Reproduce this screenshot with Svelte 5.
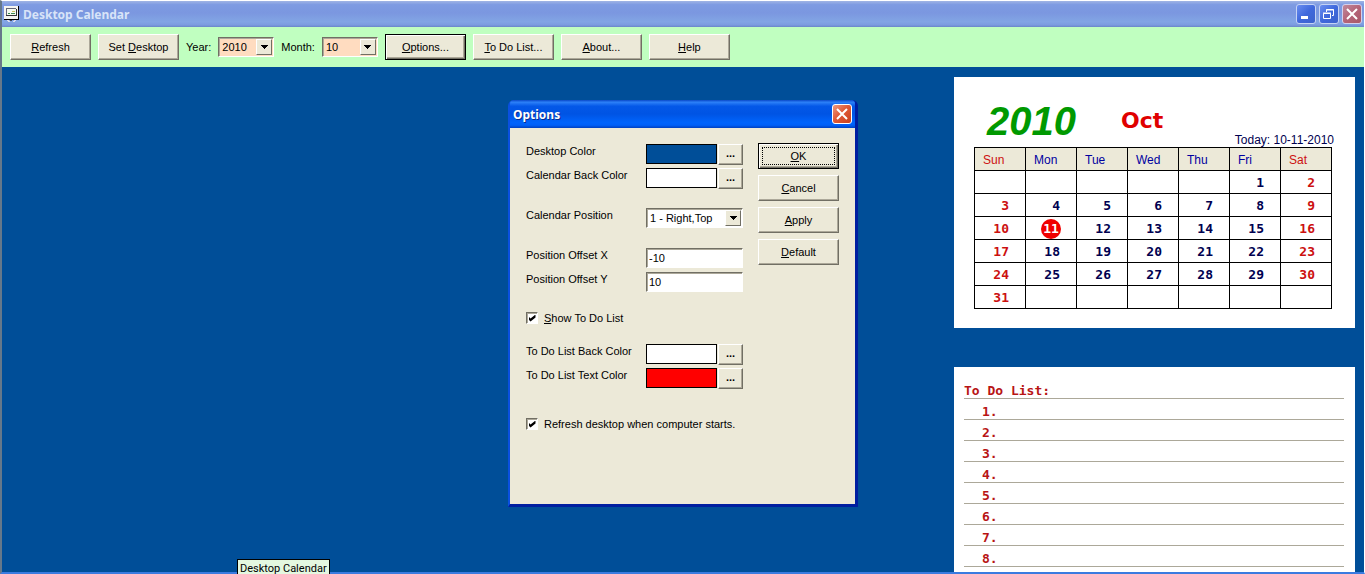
<script>
  const weekdays = ["Sun", "Mon", "Tue", "Wed", "Thu", "Fri", "Sat"];
  const years = [2009, 2010, 2011];
  const months = [1, 2, 3, 4, 5, 6, 7, 8, 9, 10, 11, 12];
  const positions = ["0 - Left,Top", "1 - Right,Top", "2 - Left,Bottom", "3 - Right,Bottom"];
  const todos = [1, 2, 3, 4, 5, 6, 7, 8];
  const today = 11;

  let year = $state(2010);
  let month = $state(10);
  let position = $state("1 - Right,Top");
  let offsetX = $state("-10");
  let offsetY = $state("10");
  let showTodo = $state(true);
  let refreshOnStart = $state(true);

  // October 2010 starts on a Friday
  const firstDay = 5;
  const weeks = [];
  for (let w = 0; w < 6; w++) {
    const week = [];
    for (let d = 0; d < 7; d++) {
      const day = w * 7 + d - firstDay + 1;
      week.push(day > 0 && day <= 31 ? day : null);
    }
    weeks.push(week);
  }
</script>

{#snippet arrow()}
  <span class="arrow">
    <svg width="7" height="4" viewBox="0 0 7 4" shape-rendering="crispEdges">
      <path d="M0 0h7v1H6v1H5v1H4v1H3V3H2V2H1V1H0z" fill="#000" />
    </svg>
  </span>
{/snippet}

{#snippet colorRow(label, color)}
  <div class="row">
    <span class="label">{label}</span>
    <div class="control">
      <span class="swatch {color}"></span>
      <button class="btn more" aria-label="Choose {label}">...</button>
    </div>
  </div>
{/snippet}

<div class="window">
  <header class="titlebar">
    <svg class="app-icon" width="16" height="17" viewBox="0 0 16 17" shape-rendering="crispEdges">
      <path d="M0 0h14v13H0z" fill="#f4f4f0" />
      <path d="M14 0h1v14H0v-1h14z" fill="#000" />
      <path d="M2 2h10v1H2zM2 2h1v7H2z" fill="#667" />
      <path d="M3 3h9v6H3z" fill="#f6fbf0" />
      <path d="M12 3h1v7H2V9h10z" fill="#333" />
      <path d="M4 7h2v1H4zM7 7h4v1H7z" fill="#3c8a50" />
      <path d="M8 5h3v1H8z" fill="#c8c060" />
      <path d="M3 14h2v1H3zM4 15h2v1H4zM10 14h2v1h-2zM9 15h2v1H9z" fill="#dde" />
      <path d="M6 14h2v1H6z" fill="#445" />
    </svg>
    <h1>Desktop Calendar</h1>
    <div class="caption">
      <button class="cap" aria-label="Minimize">
        <svg width="18" height="18" viewBox="0 0 18 18"><path d="M4 11h7v3H4z" fill="#fff" /></svg>
      </button>
      <button class="cap" aria-label="Restore">
        <svg width="18" height="18" viewBox="0 0 18 18" fill="none" stroke="#fff">
          <path d="M6.500 7V4.500h7v6H12M6 5h8" />
          <path d="M3.500 8.500h7v5h-7zM3 8h8" />
        </svg>
      </button>
      <button class="cap close dim" aria-label="Close">
        <svg width="18" height="18" viewBox="0 0 18 18"><path d="M4 4l10 10M14 4L4 14" stroke="#fff" stroke-width="2" /></svg>
      </button>
    </div>
  </header>

  <nav class="toolbar">
    <button class="btn"><u>R</u>efresh</button>
    <button class="btn">Set <u>D</u>esktop</button>
    <label for="year">Year:</label>
    <div class="select small">
      <select id="year" bind:value={year}>
        {#each years as y}<option value={y}>{y}</option>{/each}
      </select>
      {@render arrow()}
    </div>
    <label for="month">Month:</label>
    <div class="select small">
      <select id="month" bind:value={month}>
        {#each months as m}<option value={m}>{m}</option>{/each}
      </select>
      {@render arrow()}
    </div>
    <button class="btn default"><u>O</u>ptions...</button>
    <button class="btn"><u>T</u>o Do List...</button>
    <button class="btn"><u>A</u>bout...</button>
    <button class="btn"><u>H</u>elp</button>
  </nav>

  <main class="desktop">
    <div class="panels">
      <section class="calendar">
        <div class="heading">
          <span class="year">2010</span>
          <span class="month">Oct</span>
          <span class="today">Today: 10-11-2010</span>
        </div>
        <table>
          <thead>
            <tr>
              {#each weekdays as name}<th>{name}</th>{/each}
            </tr>
          </thead>
          <tbody>
            {#each weeks as week}
              <tr>
                {#each week as day}
                  <td>
                    {#if day === today}
                      <span class="current">{day}</span>
                    {:else}
                      {day ?? ""}
                    {/if}
                  </td>
                {/each}
              </tr>
            {/each}
          </tbody>
        </table>
      </section>

      <section class="todo">
        <h2>To Do List:</h2>
        <ul>
          {#each todos as n}
            <li>{n}.</li>
          {/each}
        </ul>
      </section>
    </div>

    <div class="dialog" role="dialog" aria-labelledby="dialog-title">
      <div class="dialog-title">
        <h2 id="dialog-title">Options</h2>
        <button class="cap close" aria-label="Close">
          <svg width="18" height="18" viewBox="0 0 18 18"><path d="M4 4l10 10M14 4L4 14" stroke="#fff" stroke-width="2" /></svg>
        </button>
      </div>
      <div class="dialog-body">
        <form>
          <div class="group">
            {@render colorRow("Desktop Color", "blue")}
            {@render colorRow("Calendar Back Color", "white")}
          </div>
          <div class="group">
            <div class="row">
              <label class="label" for="position">Calendar Position</label>
              <div class="control select">
                <select id="position" bind:value={position}>
                  {#each positions as p}<option value={p}>{p}</option>{/each}
                </select>
                {@render arrow()}
              </div>
            </div>
          </div>
          <div class="group">
            <div class="row">
              <label class="label" for="offset-x">Position Offset X</label>
              <input class="control" id="offset-x" type="text" bind:value={offsetX} />
            </div>
            <div class="row">
              <label class="label" for="offset-y">Position Offset Y</label>
              <input class="control" id="offset-y" type="text" bind:value={offsetY} />
            </div>
          </div>
          <label class="check">
            <input type="checkbox" bind:checked={showTodo} />
            <span><u>S</u>how To Do List</span>
          </label>
          <div class="group">
            {@render colorRow("To Do List Back Color", "white")}
            {@render colorRow("To Do List Text Color", "red")}
          </div>
          <label class="check startup">
            <input type="checkbox" bind:checked={refreshOnStart} />
            <span>Refresh desktop when computer starts.</span>
          </label>
        </form>
        <div class="actions">
          <button class="btn default focus"><u>O</u>K</button>
          <button class="btn"><u>C</u>ancel</button>
          <button class="btn"><u>A</u>pply</button>
          <button class="btn"><u>D</u>efault</button>
        </div>
      </div>
    </div>
  </main>

  <div class="tooltip" role="tooltip">Desktop Calendar</div>
</div>

<style>
  :global(body) {
    margin: 0;
    overflow: hidden;
  }

  .window {
    position: relative;
    box-sizing: border-box;
    height: 100vh;
    display: flex;
    flex-direction: column;
    border: solid;
    border-width: 1px 1px 2px 2px;
    border-color: #fff #fff #3a7be0 #66788a;
    font-family: "Liberation Sans", Arial, sans-serif;
    font-size: 11px;
    line-height: 14px;
    color: #000;
  }

  .window * {
    box-sizing: border-box;
  }

  button,
  select,
  input {
    font: inherit;
    color: inherit;
    margin: 0;
    border-radius: 0;
  }

  h1,
  h2 {
    margin: 0;
  }

  .titlebar {
    flex: none;
    display: flex;
    align-items: center;
    height: 26px;
    padding: 0 2px;
    background: linear-gradient(#a0b4e4 0%, #7e9be2 14%, #7b97e0 45%, #82a5e4 80%, #7c9ce0 92%, #6a86c8 100%);
  }

  .titlebar h1 {
    flex: 1;
    padding: 2px 0 0 3px;
    color: #d8e4f8;
    font: bold 12px/16px "Noto Sans", sans-serif;
  }

  .caption {
    display: flex;
    gap: 3px;
  }

  .cap {
    display: flex;
    align-items: center;
    justify-content: center;
    width: 20px;
    height: 20px;
    padding: 0;
    border: 1px solid #c4d2f4;
    border-radius: 3px;
    background: linear-gradient(135deg, #6a8ef0, #3f68dc 50%, #3c62cc);
  }

  .close {
    border-color: #fff;
    background: linear-gradient(135deg, #ee9a80, #e05a38 45%, #c8401c);
  }

  .dim {
    border-color: #d4d0ec;
    background: linear-gradient(135deg, #c08a9c, #b46478 50%, #a85868);
  }

  .toolbar {
    flex: none;
    display: flex;
    align-items: center;
    gap: 7px;
    height: 40px;
    padding: 0 8px;
    background: #c0ffc0;
  }

  .btn {
    flex: none;
    width: 81px;
    height: 26px;
    padding: 0;
    border: 1px solid;
    border-color: #fff #716f64 #716f64 #fff;
    box-shadow: inset -1px -1px #aca899;
    background: #ece9d8;
    text-align: center;
  }

  .btn.default {
    border-color: #000;
    box-shadow: inset 1px 1px #fff, inset -1px -1px #716f64, inset -2px -2px #aca899;
  }

  .btn.focus {
    outline: 1px dotted #000;
    outline-offset: -5px;
  }

  .btn.more {
    width: 25px;
    height: 21px;
    padding-bottom: 4px;
    font-weight: bold;
    line-height: 12px;
  }

  .select {
    position: relative;
    height: 20px;
    border: 1px solid;
    border-color: #716f64 #fff #fff #716f64;
    box-shadow: inset 1px 1px #aca899;
    background: #fff;
  }

  .select select {
    width: 100%;
    height: 100%;
    padding: 0 0 0 3px;
    border: 0;
    outline: 0;
    appearance: none;
    background: none;
  }

  .select.small {
    width: 56px;
    background: #ffdcc0;
  }

  /* drop-down button drawn over the right end of the select */
  .arrow {
    position: absolute;
    top: 1px;
    right: 1px;
    bottom: 1px;
    display: flex;
    align-items: center;
    justify-content: center;
    width: 16px;
    border: 1px solid;
    border-color: #fff #716f64 #716f64 #fff;
    background: #ece9d8;
    pointer-events: none;
  }

  .desktop {
    position: relative;
    flex: 1;
    min-height: 0;
    display: flex;
    justify-content: flex-end;
    padding: 10px 9px 0 0;
    background: #004e98;
  }

  .panels {
    display: flex;
    flex-direction: column;
    gap: 39px;
    width: 401px;
  }

  .calendar {
    padding: 20px 23px 19px 20px;
    background: #fff;
  }

  .heading {
    display: flex;
    align-items: center;
    height: 50px;
    padding-left: 13px;
  }

  .heading .year {
    padding-bottom: 2px;
    color: #009900;
    font: italic bold 40px/44px "Liberation Sans", sans-serif;
  }

  .heading .month {
    padding: 0 0 2px 45px;
    color: #e00000;
    font: bold 22px/26px "DejaVu Sans", sans-serif;
  }

  .today {
    flex: 1;
    align-self: flex-end;
    margin-right: -2px;
    color: #000050;
    font-size: 12px;
    text-align: right;
    white-space: nowrap;
  }

  table {
    width: 100%;
    table-layout: fixed;
    border-collapse: collapse;
  }

  th,
  td {
    height: 23px;
    padding: 2px 0 0;
    border: 1px solid #000;
  }

  th {
    padding-left: 8px;
    background: #ece9d8;
    color: #0000a0;
    font-size: 12px;
    font-weight: normal;
    text-align: left;
  }

  td {
    padding-right: 16px;
    color: #000050;
    font: bold 13px/16px "DejaVu Sans Mono", monospace;
    text-align: right;
  }

  th:first-child,
  th:last-child,
  td:first-child,
  td:last-child {
    color: #cc1010;
  }

  .current {
    display: block;
    width: 20px;
    height: 20px;
    margin-left: 15px;
    border-radius: 50%;
    background: #f00000;
    color: #fff;
    line-height: 20px;
    text-align: center;
  }

  .todo {
    flex: 1;
    min-height: 0;
    padding: 11px 11px 0 10px;
    background: #fff;
    color: #b81414;
    font: bold 13px/20px "DejaVu Sans Mono", monospace;
  }

  .todo h2,
  .todo li {
    height: 21px;
    border-bottom: 1px solid #aca899;
    font: inherit;
    line-height: 26px;
  }

  .todo ul {
    margin: 0;
    padding: 0;
    list-style: none;
  }

  .todo li {
    padding-left: 18px;
  }

  .dialog {
    position: absolute;
    top: 33px;
    left: 0;
    right: 0;
    width: 350px;
    margin: 0 auto;
    border: solid;
    border-width: 0 3px 3px 2px;
    border-color: #0830b8 #001ea0 #001ea0 #0a50e0;
    border-radius: 6px 6px 0 0;
    background: #0054e3;
  }

  .dialog-title {
    display: flex;
    align-items: center;
    justify-content: space-between;
    height: 28px;
    padding: 0 3px;
    border-radius: 4px 4px 0 0;
    background: linear-gradient(#0a48c8 0%, #2c80f8 8%, #0458e8 22%, #0054e4 50%, #0064fc 80%, #0060f8 90%, #0040c0 100%);
  }

  .dialog-title h2 {
    padding-top: 2px;
    color: #fff;
    font: bold 12px/16px "Noto Sans", sans-serif;
    text-shadow: 1px 1px #0a2e90;
  }

  .dialog-body {
    display: flex;
    justify-content: space-between;
    min-height: 376px;
    padding: 15px 16px;
    background: #ece9d8;
  }

  form {
    display: flex;
    flex-direction: column;
    gap: 20px;
    width: 217px;
    padding-top: 1px;
  }

  .group {
    display: flex;
    flex-direction: column;
    gap: 4px;
  }

  .row {
    display: flex;
    height: 20px;
  }

  .label {
    flex: 1;
    white-space: nowrap;
  }

  .control {
    display: flex;
    gap: 1px;
    width: 97px;
  }

  .swatch {
    flex: 1;
    height: 20px;
    border: 1px solid #000;
  }

  .blue {
    background: #004e98;
  }

  .white {
    background: #fff;
  }

  .red {
    background: #f00;
  }

  input[type="text"] {
    padding: 0 2px;
    border: 1px solid;
    border-color: #716f64 #fff #fff #716f64;
    box-shadow: inset 1px 1px #aca899;
    outline: 0;
    background: #fff;
  }

  .check {
    display: flex;
    align-items: center;
    gap: 6px;
    height: 12px;
    white-space: nowrap;
  }

  .check input {
    display: grid;
    place-content: center;
    width: 12px;
    height: 12px;
    appearance: none;
    border: 1px solid;
    border-color: #716f64 #fff #fff #716f64;
    box-shadow: inset 1px 1px #aca899;
    background: #fff;
  }

  .check input:checked::before {
    content: "";
    width: 7px;
    height: 7px;
    background: #000;
    clip-path: polygon(0 29%, 29% 58%, 100% 0, 100% 42%, 29% 100%, 0 71%);
  }

  .startup {
    margin-top: 10px;
  }

  .actions {
    display: flex;
    flex-direction: column;
    gap: 6px;
  }

  .tooltip {
    position: absolute;
    left: 235px;
    bottom: -6px;
    padding: 0 2px;
    border: 1px solid #000;
    background: #e4f8e0;
    font: 11px/17px Roboto, sans-serif;
  }
</style>
